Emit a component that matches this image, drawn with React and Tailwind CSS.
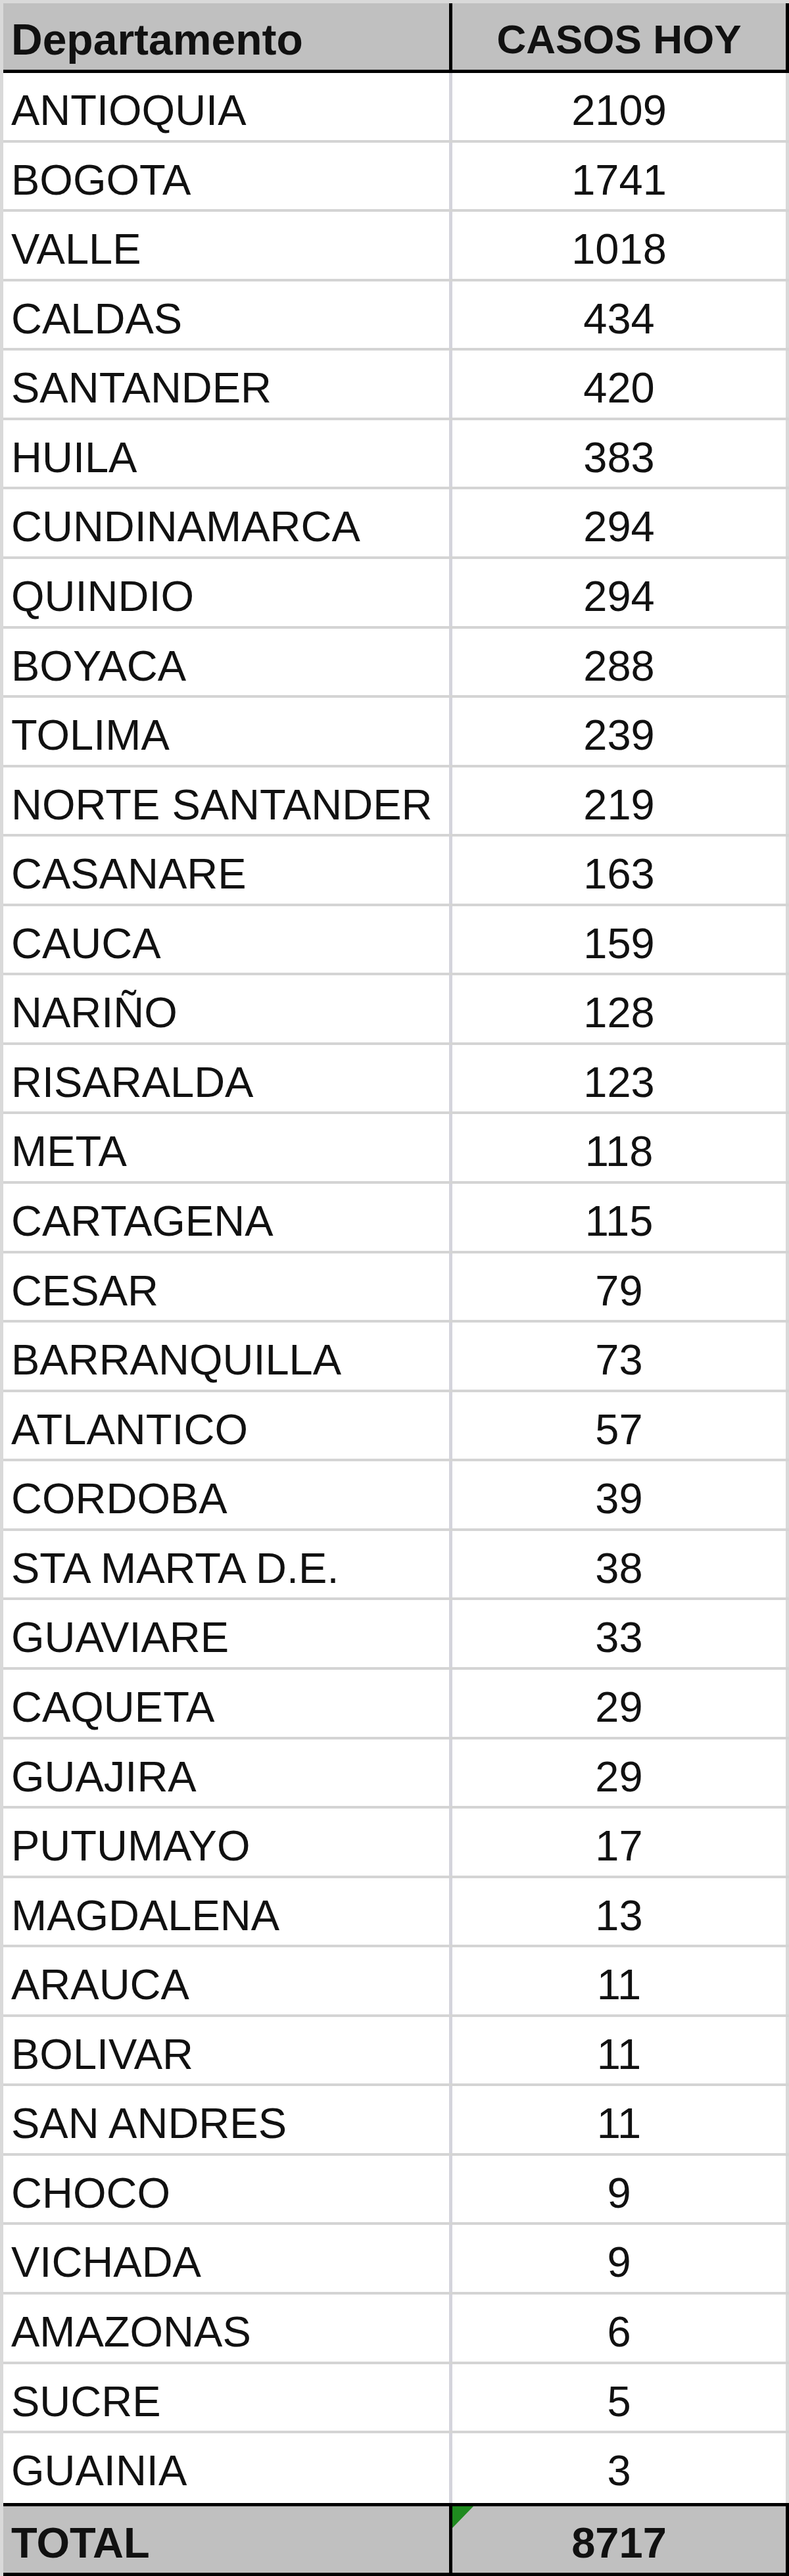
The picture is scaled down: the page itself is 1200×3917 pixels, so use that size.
import React from "react";

const rows = [
  ["ANTIOQUIA", "2109"],
  ["BOGOTA", "1741"],
  ["VALLE", "1018"],
  ["CALDAS", "434"],
  ["SANTANDER", "420"],
  ["HUILA", "383"],
  ["CUNDINAMARCA", "294"],
  ["QUINDIO", "294"],
  ["BOYACA", "288"],
  ["TOLIMA", "239"],
  ["NORTE SANTANDER", "219"],
  ["CASANARE", "163"],
  ["CAUCA", "159"],
  ["NARIÑO", "128"],
  ["RISARALDA", "123"],
  ["META", "118"],
  ["CARTAGENA", "115"],
  ["CESAR", "79"],
  ["BARRANQUILLA", "73"],
  ["ATLANTICO", "57"],
  ["CORDOBA", "39"],
  ["STA MARTA D.E.", "38"],
  ["GUAVIARE", "33"],
  ["CAQUETA", "29"],
  ["GUAJIRA", "29"],
  ["PUTUMAYO", "17"],
  ["MAGDALENA", "13"],
  ["ARAUCA", "11"],
  ["BOLIVAR", "11"],
  ["SAN ANDRES", "11"],
  ["CHOCO", "9"],
  ["VICHADA", "9"],
  ["AMAZONAS", "6"],
  ["SUCRE", "5"],
  ["GUAINIA", "3"],
];

export default function App() {
  return (
    <div
      className="w-[1200px] h-[3917px] bg-[#d9d9d9] pl-[5px] pt-[5px] text-[65px] leading-[68px] text-[#111111]"
      style={{ fontFamily: '"Liberation Sans", Arial, sans-serif' }}
    >
      {/* Header */}
      <div className="flex h-[106px] border-b-[5px] border-black bg-[#c0c0c0] font-bold">
        <div className="w-[678px] pl-[12px] pt-[21px] whitespace-nowrap text-[66px]">Departamento</div>
        <div className="w-[5px] bg-black" />
        <div className="w-[507px] pt-[21px] text-center whitespace-nowrap text-[62px]">CASOS HOY</div>
        <div className="w-[5px] bg-black" />
      </div>

      {/* Data rows */}
      {rows.map(([name, value], i) => (
        <div
          key={name}
          className={
            i < rows.length - 1
              ? "flex h-[105.57px] bg-white border-b-[4px] border-[#d4d4d4]"
              : "flex h-[105.57px] bg-white"
          }
        >
          <div className="w-[678px] pl-[12px] pt-[23px] whitespace-nowrap">{name}</div>
          <div className="w-[5px] bg-[#d4d4dc]" />
          <div className="w-[507px] pt-[23px] text-center">{value}</div>
          <div className="w-[5px] bg-[#d9d9d9]" />
        </div>
      ))}

      {/* Total */}
      <div className="flex h-[111px] border-y-[5px] border-black bg-[#c0c0c0] font-bold">
        <div className="w-[678px] pl-[12px] pt-[22px]">TOTAL</div>
        <div className="w-[5px] bg-black" />
        <div className="relative w-[507px] pt-[22px] text-center">
          <svg
            className="absolute left-0 top-0"
            width="32"
            height="33"
            viewBox="0 0 32 33"
          >
            <polygon points="0,0 32,0 0,33" fill="#1f8a1f" />
          </svg>
          8717
        </div>
        <div className="w-[5px] bg-black" />
      </div>
    </div>
  );
}
